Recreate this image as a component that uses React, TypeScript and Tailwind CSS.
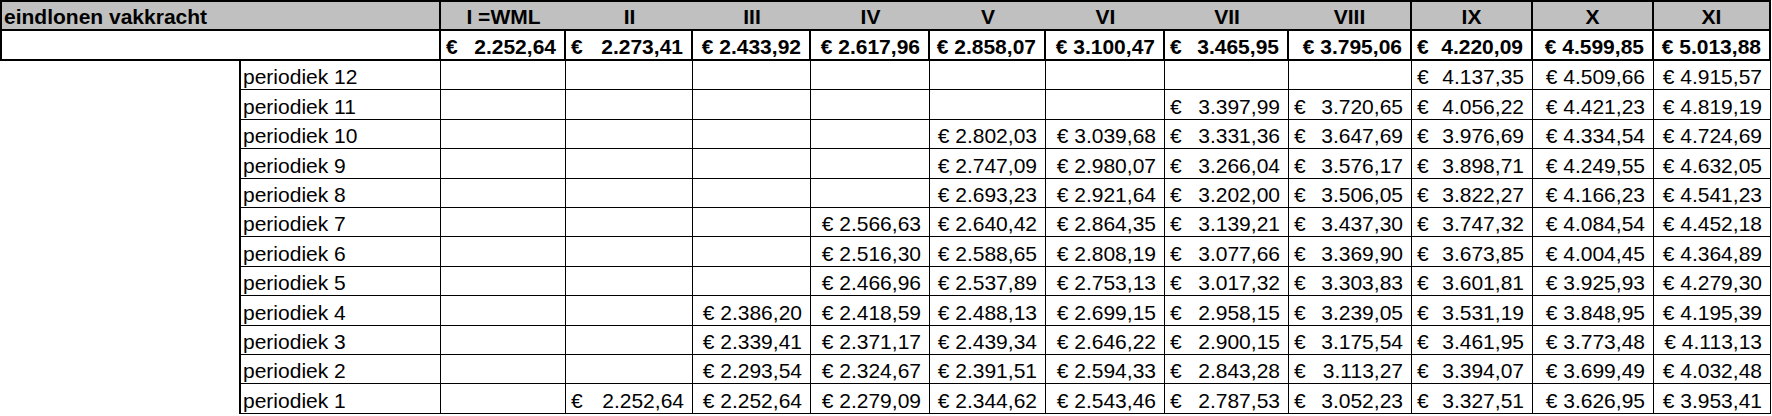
const columns = ['I =WML', 'II', 'III', 'IV', 'V', 'VI', 'VII', 'VIII', 'IX', 'X', 'XI'];

// eindloon per schaal, bold row under the header
const totals = ['2.252,64', '2.273,41', '2.433,92', '2.617,96', '2.858,07', '3.100,47', '3.465,95', '3.795,06', '4.220,09', '4.599,85', '5.013,88'];
const totalSplit = [true, true, false, false, false, false, true, false, true, false, false];

// which columns show the € at the left edge in the periodiek rows
const rowSplit = [false, true, false, false, false, false, true, true, true, false, false];

const rows: { label: string; values: (string | null)[] }[] = [
  { label: 'periodiek 12', values: [null, null, null, null, null, null, null, null, '4.137,35', '4.509,66', '4.915,57'] },
  { label: 'periodiek 11', values: [null, null, null, null, null, null, '3.397,99', '3.720,65', '4.056,22', '4.421,23', '4.819,19'] },
  { label: 'periodiek 10', values: [null, null, null, null, '2.802,03', '3.039,68', '3.331,36', '3.647,69', '3.976,69', '4.334,54', '4.724,69'] },
  { label: 'periodiek 9', values: [null, null, null, null, '2.747,09', '2.980,07', '3.266,04', '3.576,17', '3.898,71', '4.249,55', '4.632,05'] },
  { label: 'periodiek 8', values: [null, null, null, null, '2.693,23', '2.921,64', '3.202,00', '3.506,05', '3.822,27', '4.166,23', '4.541,23'] },
  { label: 'periodiek 7', values: [null, null, null, '2.566,63', '2.640,42', '2.864,35', '3.139,21', '3.437,30', '3.747,32', '4.084,54', '4.452,18'] },
  { label: 'periodiek 6', values: [null, null, null, '2.516,30', '2.588,65', '2.808,19', '3.077,66', '3.369,90', '3.673,85', '4.004,45', '4.364,89'] },
  { label: 'periodiek 5', values: [null, null, null, '2.466,96', '2.537,89', '2.753,13', '3.017,32', '3.303,83', '3.601,81', '3.925,93', '4.279,30'] },
  { label: 'periodiek 4', values: [null, null, '2.386,20', '2.418,59', '2.488,13', '2.699,15', '2.958,15', '3.239,05', '3.531,19', '3.848,95', '4.195,39'] },
  { label: 'periodiek 3', values: [null, null, '2.339,41', '2.371,17', '2.439,34', '2.646,22', '2.900,15', '3.175,54', '3.461,95', '3.773,48', '4.113,13'] },
  { label: 'periodiek 2', values: [null, null, '2.293,54', '2.324,67', '2.391,51', '2.594,33', '2.843,28', '3.113,27', '3.394,07', '3.699,49', '4.032,48'] },
  { label: 'periodiek 1', values: [null, '2.252,64', '2.252,64', '2.279,09', '2.344,62', '2.543,46', '2.787,53', '3.052,23', '3.327,51', '3.626,95', '3.953,41'] },
];

const Euro = ({ value, split }: { value: string; split: boolean }) =>
  split ? (
    <div className="flex w-full justify-between pl-[5px] pr-[8px]">
      <span>€</span>
      <span>{value}</span>
    </div>
  ) : (
    <div className="flex w-full justify-end pr-[8px]">
      <span>€ {value}</span>
    </div>
  );

export default function App() {
  return (
    <div className="h-[416px] w-[1772px] overflow-hidden bg-white text-black font-['Liberation_Sans',Arial,sans-serif] text-[21px] leading-[24px]">
      <div className="grid grid-cols-[239px_202px_125px_127px_118px_119px_116px_119px_124px_123px_121px_121px_117px] grid-rows-[31px_30px_repeat(12,29.4px)]">
        {/* header */}
        <div className="col-span-2 flex items-end border-y-2 border-l-2 border-r-2 border-black bg-[#c0c0c0] pl-[2px] font-bold">
          eindlonen vakkracht
        </div>
        {columns.map((c, i) => (
          <div
            key={c}
            className={`flex items-end justify-center border-y-2 border-black bg-[#c0c0c0] font-bold ${i >= 7 ? 'border-r-2' : ''}`}
          >
            {c}
          </div>
        ))}

        {/* eindloon */}
        <div className="col-span-2 border-b-2 border-l-2 border-r-2 border-black" />
        {totals.map((t, i) => (
          <div key={t} className="flex items-end border-b-2 border-r-2 border-black font-bold">
            <Euro value={t} split={totalSplit[i]} />
          </div>
        ))}

        {/* periodieken */}
        {rows.map((row) => (
          <div key={row.label} className="contents">
            <div />
            <div className="flex items-end border-b border-l-2 border-r border-black pl-[2px]">{row.label}</div>
            {row.values.map((v, i) => (
              <div key={i} className="flex items-end border-b border-r border-black">
                {v && <Euro value={v} split={rowSplit[i]} />}
              </div>
            ))}
          </div>
        ))}
      </div>
    </div>
  );
}
